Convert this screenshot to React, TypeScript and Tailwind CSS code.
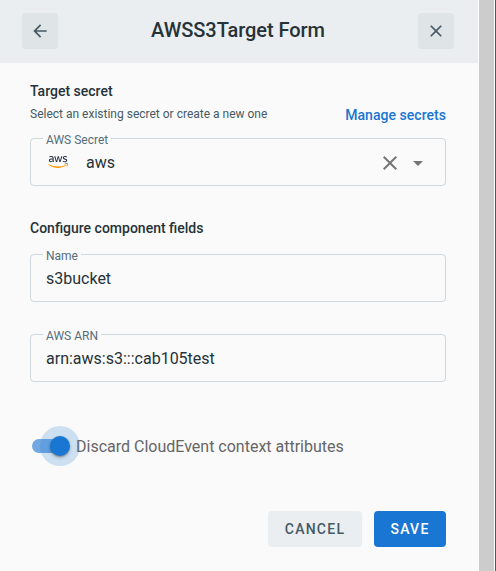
import type { ReactNode } from 'react';
import { FaAws } from 'react-icons/fa';

const paths = {
  back: 'M20 11H7.83l5.59-5.59L12 4l-8 8 8 8 1.41-1.41L7.83 13H20v-2z',
  close:
    'M19 6.41 17.59 5 12 10.59 6.41 5 5 6.41 10.59 12 5 17.59 6.41 19 12 13.41 17.59 19 19 17.59 13.41 12z',
  caret: 'M7 10l5 5 5-5z',
};

function Icon({ name, className }: { name: keyof typeof paths; className: string }) {
  return (
    <svg viewBox="0 0 24 24" fill="currentColor" className={className} aria-hidden="true">
      <path d={paths[name]} />
    </svg>
  );
}

function SquareButton({ label, children }: { label: string; children: ReactNode }) {
  return (
    <button
      aria-label={label}
      className="flex h-9 w-9 items-center justify-center rounded bg-[#dfe4e7] text-[#455a64]"
    >
      {children}
    </button>
  );
}

function Field({ label, children }: { label: string; children: ReactNode }) {
  return (
    <div className="relative flex h-12 items-center rounded border border-[#cfd8dc] px-[15px] pt-[2px] text-base text-[#263238]">
      <span className="absolute -top-[7px] left-3 bg-[#fafafa] pr-[3px] pl-[3px] text-xs leading-4 text-[#546e7a]">
        {label}
      </span>
      {children}
    </div>
  );
}

function AwsLogo() {
  return (
    <span className="relative block h-4 w-5">
      <span className="absolute inset-x-0 top-0 h-[10px] overflow-hidden text-[#252f3e]">
        <FaAws className="h-4 w-5" />
      </span>
      <span className="absolute inset-x-0 bottom-0 flex h-[6px] items-end overflow-hidden text-[#ff9900]">
        <FaAws className="h-4 w-5 shrink-0" />
      </span>
    </span>
  );
}

export default function App() {
  return (
    <div className="flex h-[571px] w-[496px] overflow-hidden bg-[#fafafa] font-['Roboto','Liberation_Sans',sans-serif]">
      <main className="flex w-[478px] flex-col">
        <header className="flex h-[63px] items-start justify-between bg-[#eaeef1] pt-[13px] pr-6 pl-[22px]">
          <SquareButton label="Back">
            <Icon name="back" className="h-5 w-5" />
          </SquareButton>
          <h1 className="pt-px text-xl leading-8 font-medium tracking-[-0.05px] text-[#263238]">AWSS3Target Form</h1>
          <SquareButton label="Close">
            <Icon name="close" className="h-5 w-5" />
          </SquareButton>
        </header>

        <section className="flex flex-col pt-[18px] pr-8 pl-[30px]">
          <h2 className="text-sm leading-5 font-medium text-[#263238]">Target secret</h2>
          <div className="mt-[3px] flex h-5 items-center justify-between">
            <p className="text-xs leading-5 text-[#455a64]">Select an existing secret or create a new one</p>
            <a className="pt-[2px] text-sm leading-5 font-medium tracking-[0.04px] text-[#1976d2]">Manage secrets</a>
          </div>
          <div className="mt-[14px]">
            <Field label="AWS Secret">
              <span className="mb-[2px] ml-[2px]">
                <AwsLogo />
              </span>
              <span className="ml-[18px] flex-1">aws</span>
              <Icon name="close" className="h-6 w-6 text-[#757575]" />
              <Icon name="caret" className="ml-1 h-6 w-6 text-[#757575]" />
            </Field>
          </div>

          <h2 className="mt-8 text-sm leading-5 font-medium text-[#263238]">Configure component fields</h2>
          <div className="mt-4 flex flex-col gap-8">
            <Field label="Name">s3bucket</Field>
            <Field label="AWS ARN">arn:aws:s3:::cab105test</Field>
          </div>
        </section>

        <div className="mt-11 ml-[32px] flex h-10 items-center">
          <span className="relative flex h-[14px] w-11 items-center">
            <span className="h-[14px] w-[34px] rounded-full bg-[#73a9e2]" />
            <span className="absolute -top-[13px] left-2 flex h-10 w-10 items-center justify-center rounded-full bg-[#1976d2]/20">
              <span className="h-5 w-5 rounded-full bg-[#1976d2] shadow-[0_2px_4px_-1px_rgba(0,0,0,0.3),0_1px_1px_rgba(0,0,0,0.14),0_1px_3px_rgba(0,0,0,0.12)]" />
            </span>
          </span>
          <span className="relative pt-[2px] text-base text-[#666666]">Discard CloudEvent context attributes</span>
        </div>

        <footer className="mt-[45px] flex justify-end gap-3 pr-8 text-sm font-medium tracking-[1.25px]">
          <button className="h-9 w-[94px] rounded bg-[#eaeef1] text-[#455a64]">CANCEL</button>
          <button className="h-9 w-[72px] rounded bg-[#1976d2] text-white">SAVE</button>
        </footer>
      </main>
      <div className="w-[18px] border-r border-[#555555] bg-white px-px">
        <div className="h-full w-[15px] bg-[#cccccc]" />
      </div>
    </div>
  );
}
